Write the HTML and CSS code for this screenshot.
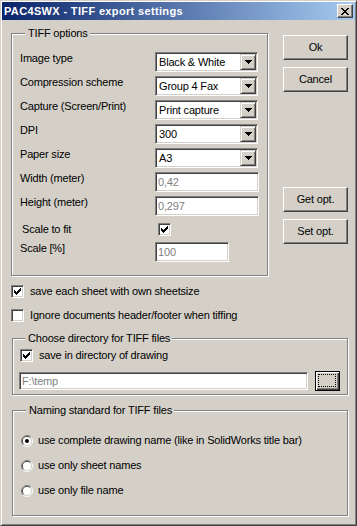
FILE: index.html
```html
<!DOCTYPE html>
<html>
  <head>
    <meta charset="UTF-8" />
    <title>PAC4SWX - TIFF export settings</title>
    <link rel="stylesheet" href="styles.css">
  </head>
  <body>
    <div class="window">
      <div class="titlebar">
        <span class="title">PAC4SWX - TIFF export settings</span>
        <span class="close-btn">
          <svg width="8" height="7" viewBox="0 0 8 7" shape-rendering="crispEdges">
            <path d="M0 0h2v1h-2z M6 0h2v1h-2z M1 1h2v1h-2z M5 1h2v1h-2z M2 2h4v1h-4z M3 3h2v1h-2z M2 4h4v1h-4z M1 5h2v1h-2z M5 5h2v1h-2z M0 6h2v1h-2z M6 6h2v1h-2z" fill="#000" />
          </svg>
        </span>
      </div>

      <div class="client">
        <div class="top">
          <div class="group group-options">
            <div class="legend">TIFF options</div>
            <div class="rows">
              <div class="row">
                <span class="label">Image type</span>
                <div class="combo">
                  <span class="combo-text">Black &amp; White</span>
                  <span class="combo-btn"><svg width="7" height="4" viewBox="0 0 7 4" shape-rendering="crispEdges"><path d="M0 0h7v1h-7z M1 1h5v1h-5z M2 2h3v1h-3z M3 3h1v1h-1z" fill="#000" /></svg></span>
                </div>
              </div>
              <div class="row">
                <span class="label">Compression scheme</span>
                <div class="combo">
                  <span class="combo-text">Group 4 Fax</span>
                  <span class="combo-btn"><svg width="7" height="4" viewBox="0 0 7 4" shape-rendering="crispEdges"><path d="M0 0h7v1h-7z M1 1h5v1h-5z M2 2h3v1h-3z M3 3h1v1h-1z" fill="#000" /></svg></span>
                </div>
              </div>
              <div class="row">
                <span class="label">Capture (Screen/Print)</span>
                <div class="combo">
                  <span class="combo-text">Print capture</span>
                  <span class="combo-btn"><svg width="7" height="4" viewBox="0 0 7 4" shape-rendering="crispEdges"><path d="M0 0h7v1h-7z M1 1h5v1h-5z M2 2h3v1h-3z M3 3h1v1h-1z" fill="#000" /></svg></span>
                </div>
              </div>
              <div class="row">
                <span class="label">DPI</span>
                <div class="combo">
                  <span class="combo-text">300</span>
                  <span class="combo-btn"><svg width="7" height="4" viewBox="0 0 7 4" shape-rendering="crispEdges"><path d="M0 0h7v1h-7z M1 1h5v1h-5z M2 2h3v1h-3z M3 3h1v1h-1z" fill="#000" /></svg></span>
                </div>
              </div>
              <div class="row">
                <span class="label">Paper size</span>
                <div class="combo">
                  <span class="combo-text">A3</span>
                  <span class="combo-btn"><svg width="7" height="4" viewBox="0 0 7 4" shape-rendering="crispEdges"><path d="M0 0h7v1h-7z M1 1h5v1h-5z M2 2h3v1h-3z M3 3h1v1h-1z" fill="#000" /></svg></span>
                </div>
              </div>
              <div class="row">
                <span class="label">Width (meter)</span>
                <div class="field">0,42</div>
              </div>
              <div class="row">
                <span class="label">Height (meter)</span>
                <div class="field">0,297</div>
              </div>
              <div class="row row-check">
                <span class="label label-indent">Scale to fit</span>
                <span class="box box-indent">
                  <svg width="9" height="9" viewBox="2 2 9 9" shape-rendering="crispEdges"><path d="M9 3h1v1h-1z M8 4h2v1h-2z M3 5h1v1h-1z M7 5h3v1h-3z M3 6h2v1h-2z M6 6h3v1h-3z M3 7h5v1h-5z M4 8h3v1h-3z M5 9h1v1h-1z" fill="#000" /></svg>
                </span>
              </div>
              <div class="row">
                <span class="label">Scale [%]</span>
                <div class="field field-short">100</div>
              </div>
            </div>
          </div>

          <div class="side">
            <button class="btn">Ok</button>
            <button class="btn">Cancel</button>
            <button class="btn btn-get">Get opt.</button>
            <button class="btn">Set opt.</button>
          </div>
        </div>

        <div class="check check-sheets">
          <span class="box">
            <svg width="9" height="9" viewBox="2 2 9 9" shape-rendering="crispEdges"><path d="M9 3h1v1h-1z M8 4h2v1h-2z M3 5h1v1h-1z M7 5h3v1h-3z M3 6h2v1h-2z M6 6h3v1h-3z M3 7h5v1h-5z M4 8h3v1h-3z M5 9h1v1h-1z" fill="#000" /></svg>
          </span>
          <span>save each sheet with own sheetsize</span>
        </div>
        <div class="check check-ignore">
          <span class="box"></span>
          <span>Ignore documents header/footer when tiffing</span>
        </div>

        <div class="group group-dir">
          <div class="legend">Choose directory for TIFF files</div>
          <div class="check check-drawing">
            <span class="box">
              <svg width="9" height="9" viewBox="2 2 9 9" shape-rendering="crispEdges"><path d="M9 3h1v1h-1z M8 4h2v1h-2z M3 5h1v1h-1z M7 5h3v1h-3z M3 6h2v1h-2z M6 6h3v1h-3z M3 7h5v1h-5z M4 8h3v1h-3z M5 9h1v1h-1z" fill="#000" /></svg>
            </span>
            <span>save in directory of drawing</span>
          </div>
          <div class="path-row">
            <div class="field field-path">F:\temp</div>
            <button class="browse-btn"><span class="focus-rect"></span></button>
          </div>
        </div>

        <div class="group group-naming">
          <div class="legend">Naming standard for TIFF files</div>
          <div class="radios">
            <div class="radio-row">
              <svg class="radio" width="12" height="12" viewBox="0 0 12 12">
                <path d="M2.1 9.9 A5.5 5.5 0 0 1 9.9 2.1" fill="none" stroke="#808080" />
                <path d="M9.9 2.1 A5.5 5.5 0 0 1 2.1 9.9" fill="none" stroke="#fff" />
                <path d="M2.8 9.2 A4.5 4.5 0 0 1 9.2 2.8" fill="none" stroke="#404040" />
                <path d="M9.2 2.8 A4.5 4.5 0 0 1 2.8 9.2" fill="none" stroke="#d4d0c8" />
                <circle cx="6" cy="6" r="4" fill="#fff" />
                <circle cx="6" cy="6" r="2" fill="#000" />
              </svg>
              <span>use complete drawing name (like in SolidWorks title bar)</span>
            </div>
            <div class="radio-row">
              <svg class="radio" width="12" height="12" viewBox="0 0 12 12">
                <path d="M2.1 9.9 A5.5 5.5 0 0 1 9.9 2.1" fill="none" stroke="#808080" />
                <path d="M9.9 2.1 A5.5 5.5 0 0 1 2.1 9.9" fill="none" stroke="#fff" />
                <path d="M2.8 9.2 A4.5 4.5 0 0 1 9.2 2.8" fill="none" stroke="#404040" />
                <path d="M9.2 2.8 A4.5 4.5 0 0 1 2.8 9.2" fill="none" stroke="#d4d0c8" />
                <circle cx="6" cy="6" r="4" fill="#fff" />
              </svg>
              <span>use only sheet names</span>
            </div>
            <div class="radio-row">
              <svg class="radio" width="12" height="12" viewBox="0 0 12 12">
                <path d="M2.1 9.9 A5.5 5.5 0 0 1 9.9 2.1" fill="none" stroke="#808080" />
                <path d="M9.9 2.1 A5.5 5.5 0 0 1 2.1 9.9" fill="none" stroke="#fff" />
                <path d="M2.8 9.2 A4.5 4.5 0 0 1 9.2 2.8" fill="none" stroke="#404040" />
                <path d="M9.2 2.8 A4.5 4.5 0 0 1 2.8 9.2" fill="none" stroke="#d4d0c8" />
                <circle cx="6" cy="6" r="4" fill="#fff" />
              </svg>
              <span>use only file name</span>
            </div>
          </div>
        </div>
      </div>
    </div>
  </body>
</html>
```

FILE: styles.css
```css
* {
  box-sizing: border-box;
}

body {
  margin: 0;
  background: #d4d0c8;
  font-family: "Liberation Sans", Arial, sans-serif;
  font-size: 11px;
  line-height: 13px;
  letter-spacing: -0.18px;
  color: #000;
}

/* window frame */
.window {
  width: 357px;
  height: 526px;
  padding: 1px;
  background: #d4d0c8;
  border: 1px solid;
  border-color: #d4d0c8 #404040 #404040 #d4d0c8;
  box-shadow: inset 1px 1px #fff, inset -1px -1px #808080;
}

.titlebar {
  height: 18px;
  display: flex;
  align-items: center;
  justify-content: space-between;
  padding: 0 2px;
  background: linear-gradient(to right, #0a246a, #a6caf0);
  color: #fff;
  font-weight: bold;
  letter-spacing: 0.35px;
}

.title {
  line-height: 18px;
}

.close-btn {
  width: 16px;
  height: 14px;
  display: flex;
  align-items: center;
  justify-content: center;
  background: #d4d0c8;
  border: 1px solid;
  border-color: #fff #404040 #404040 #fff;
  box-shadow: inset -1px -1px #808080;
}

.close-btn svg {
  display: block;
}

.client {
  padding: 0 9px;
}

.top {
  display: flex;
  margin-top: 13px;
}

/* group boxes */
.group {
  border: 1px solid #808080;
  box-shadow: inset 1px 1px #fff, 1px 1px #fff;
}

.legend {
  width: fit-content;
  margin: -7px 0 0 5px;
  padding: 0 2px 0 3px;
  background: #d4d0c8;
}

.group-options {
  width: 257px;
  padding: 0 8px 13px;
}

.rows {
  display: flex;
  flex-direction: column;
  gap: 4px;
  margin-top: 12px;
}

.row {
  display: flex;
  align-items: flex-start;
  height: 20px;
}

.row-check {
  height: 18px;
  align-items: center;
}

.label {
  width: 135px;
  flex: none;
}

.label-indent {
  padding-left: 2px;
}

/* sunken controls */
.combo,
.field {
  height: 20px;
  background: #fff;
  border: 1px solid;
  border-color: #808080 #fff #fff #808080;
  box-shadow: inset 1px 1px #404040, inset -1px -1px #d4d0c8;
}

.combo {
  display: flex;
  width: 103px;
  padding: 1px;
}

.combo-text {
  flex: 1;
  padding-left: 2px;
  line-height: 16px;
}

.combo-btn {
  width: 16px;
  height: 16px;
  display: flex;
  align-items: center;
  justify-content: center;
  background: #d4d0c8;
  border: 1px solid;
  border-color: #d4d0c8 #404040 #404040 #d4d0c8;
  box-shadow: inset 1px 1px #fff, inset -1px -1px #808080;
}

.combo-btn svg {
  display: block;
}

.field {
  width: 104px;
  padding: 1px 2px;
  line-height: 16px;
  color: #808080;
}

.field-short {
  width: 74px;
}

/* buttons */
.side {
  display: flex;
  flex-direction: column;
  gap: 7px;
  margin-left: 15px;
  padding-top: 2px;
}

.btn {
  width: 65px;
  height: 25px;
  padding: 0;
  font: inherit;
  letter-spacing: inherit;
  color: #000;
  background: #d4d0c8;
  border: 1px solid;
  border-color: #fff #404040 #404040 #fff;
  box-shadow: inset -1px -1px #808080;
}

.btn-get {
  margin-top: 88px;
}

/* checkboxes */
.check {
  display: flex;
  align-items: center;
  gap: 6px;
  height: 13px;
}

.check-sheets {
  margin-top: 9px;
}

.check-ignore {
  margin-top: 11px;
}

.box {
  width: 13px;
  height: 13px;
  flex: none;
  padding: 1px;
  background: #fff;
  border: 1px solid;
  border-color: #808080 #fff #fff #808080;
  box-shadow: inset 1px 1px #404040, inset -1px -1px #d4d0c8;
}

.box svg {
  display: block;
}

.box-indent {
  margin-left: 3px;
}

/* directory group */
.group-dir {
  margin: 16px 0 0 1px;
  width: 336px;
  padding: 0 7px 3px;
}

.check-drawing {
  margin-top: 4px;
}

.path-row {
  display: flex;
  align-items: center;
  gap: 7px;
  height: 20px;
  margin: 9px 0 0 -1px;
}

.field-path {
  width: 289px;
  height: 18px;
  padding: 0 2px;
  line-height: 16px;
}

.browse-btn {
  width: 25px;
  height: 20px;
  padding: 2px 3px 3px 2px;
  background: #d4d0c8;
  border: 1px solid #000;
  box-shadow: inset 1px 1px #fff, inset -1px -1px #404040, inset -2px -2px #808080;
}

.focus-rect {
  display: block;
  width: 100%;
  height: 100%;
  border: 1px dotted #000;
}

/* naming group */
.group-naming {
  margin: 15px 0 0 1px;
  width: 336px;
  padding: 0 8px 18px;
}

.radios {
  display: flex;
  flex-direction: column;
  gap: 12px;
  margin-top: 17px;
}

.radio-row {
  display: flex;
  align-items: center;
  gap: 5px;
  height: 13px;
}

.radio {
  display: block;
  flex: none;
}
```
